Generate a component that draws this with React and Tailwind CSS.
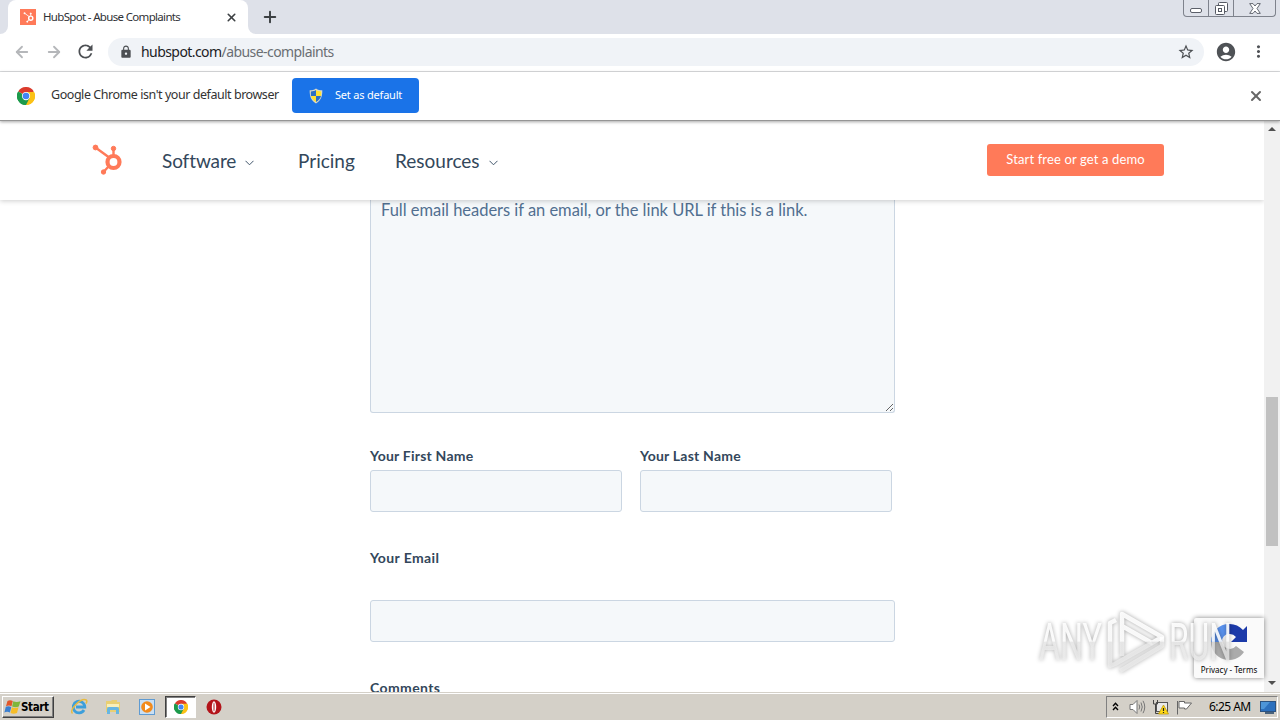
import React from 'react';
import { ArrowLeft, ArrowRight, X, Plus } from 'lucide-react';
import { MdRefresh, MdLock, MdStarOutline, MdAccountCircle, MdMoreVert } from 'react-icons/md';

const ChromeLogo = ({ size = 18 }) => (
    <svg width={size} height={size} viewBox="0 0 48 48" className="shrink-0">
        <path d="M24 24 L3.2 12 A24 24 0 0 1 44.8 12 Z" fill="#db3b2c" />
        <path d="M24 24 L44.8 12 A24 24 0 0 1 24 48 Z" fill="#fbc116" />
        <path d="M24 24 L24 48 A24 24 0 0 1 3.2 12 Z" fill="#1c9a4b" />
        <path d="M24 13 H45.3 A24 24 0 0 1 24 48 L33.5 29.5 Z" fill="#fbc116" />
        <path d="M14.5 29.5 L3.2 12 A24 24 0 0 0 24 48 L33.5 29.5 Z" fill="#1c9a4b" />
        <circle cx="24" cy="24" r="11" fill="#fff" />
        <circle cx="24" cy="24" r="8.8" fill="#4285f4" />
    </svg>
);

const Sprocket = ({ size, color, className = '' }) => (
    <svg width={size} height={size} viewBox="0 0 30 32" fill={color} stroke={color} className={`shrink-0 ${className}`}>
        <circle cx="3.5" cy="3.5" r="2.4" />
        <circle cx="21.5" cy="4.5" r="2.2" />
        <circle cx="11.5" cy="28" r="2.2" />
        <path d="M3.5 3.5 L16.5 13 M21.5 4.5 V11 M11.5 28 L16.5 22.5" fill="none" strokeWidth="2.4" />
        <circle cx="21.5" cy="18" r="6" fill="none" strokeWidth="4.2" />
    </svg>
);

const Shield = () => (
    <svg width="14" height="16" viewBox="0 0 14 16" className="shrink-0">
        <path d="M7 .5 C9 2 11 2.3 13.3 2.3 C13.5 8 12 12.8 7 15.5 C2 12.8 .5 8 .7 2.3 C3 2.3 5 2 7 .5Z" fill="#d9d9c8" />
        <path d="M7 2 V8 H2 C1.8 6.5 1.8 5 1.9 3.5 C4 3.4 5.5 3 7 2Z" fill="#2b6fc4" />
        <path d="M7 2 V8 H12 C12.2 6.5 12.2 5 12.1 3.5 C10 3.4 8.5 3 7 2Z" fill="#ffe131" />
        <path d="M7 8 V14 C4.2 12.4 2.5 10.5 2 8Z" fill="#ffe131" />
        <path d="M7 8 V14 C9.8 12.4 11.5 10.5 12 8Z" fill="#2b6fc4" />
    </svg>
);

const TabStrip = () => (
    <div className="flex h-[34px] bg-[#dee1e9]">
        <div className="w-2 bg-white">
            <div className="h-full rounded-br-lg bg-[#dee1e9]" />
        </div>
        <div className="flex w-[240px] items-center rounded-t-lg bg-white pl-3">
            <div className="flex h-4 w-4 shrink-0 items-center justify-center bg-[#ff7a59]">
                <Sprocket size={11} color="#fff" />
            </div>
            <span className="ml-[7px] w-[180px] whitespace-nowrap text-[11.5px] tracking-[-0.67px] text-[#2f3135]">HubSpot - Abuse Complaints</span>
            <X size={13} strokeWidth={3} className="ml-[2px] text-[#3c4043]" />
        </div>
        <div className="w-2 bg-white">
            <div className="h-full rounded-bl-lg bg-[#dee1e9]" />
        </div>
        <Plus size={18} strokeWidth={2.6} className="mt-2 ml-[5px] text-[#3c4043]" />
        {/* Window controls */}
        <div className="mr-1 ml-auto flex h-[17px] w-[93px] rounded-b border border-t-0 border-[#7e828c] bg-[#dee1e9]">
            <div className="flex w-[25px] items-end justify-center border-r border-[#7e828c] pb-[3px]">
                <div className="h-[5px] w-3 rounded-xs border border-[#5b5f69] bg-white" />
            </div>
            <div className="flex w-[25px] items-center justify-center border-r border-[#7e828c]">
                <svg width="13" height="14" viewBox="0 0 13 14" fill="#fff" stroke="#555963">
                    <rect x="3.5" y="1.5" width="9" height="9" rx="1" />
                    <rect x=".5" y="4.5" width="9" height="9" rx="1" />
                    <rect x="3.5" y="7.5" width="3" height="3" />
                </svg>
            </div>
            <div className="flex flex-1 items-center justify-center">
                <svg width="12" height="11" viewBox="0 0 12 11" fill="#fff" stroke="#555963" strokeWidth=".9">
                    <path d="M.7 .6 H4 L6 3 L8 .6 H11.3 L8 5.5 L11.3 10.4 H8 L6 8 L4 10.4 H.7 L4 5.5Z" />
                </svg>
            </div>
        </div>
    </div>
);

const Toolbar = () => (
    <div className="flex h-[38px] items-center border-b border-[#dcdee0] bg-white pb-[2px] pl-[13px]">
        <ArrowLeft size={18} strokeWidth={2.4} className="text-[#b5b7ba]" />
        <ArrowRight size={18} strokeWidth={2.4} className="ml-[14px] text-[#b5b7ba]" />
        <MdRefresh size={21} className="ml-3 text-[#4c4f53]" />
        <div className="ml-3 flex h-7 w-[1096px] items-center rounded-full bg-[#f0f3f7] pl-[11px]">
            <MdLock size={14} className="text-[#4c4f53]" />
            <span className="ml-2 text-[14px] tracking-[-0.57px] whitespace-nowrap text-[#6a6e73]">
                <span className="text-[#202124]">hubspot.com</span>/abuse-complaints
            </span>
            <MdStarOutline size={18} className="mr-[9px] ml-auto text-[#4c4f53]" />
        </div>
        <MdAccountCircle size={22} className="ml-[11px] text-[#4f5256]" />
        <MdMoreVert size={19} className="ml-3 text-[#4f5256]" />
    </div>
);

const InfoBar = () => (
    <div className="relative z-20 flex h-[49px] items-center border-b border-[#959595] bg-white pb-[1px] pl-[17px] shadow-[0_1px_3px_rgba(0,0,0,0.35)]">
        <ChromeLogo size={18} />
        <span className="ml-4 w-[241px] text-[12.5px] tracking-[-0.45px] whitespace-nowrap text-[#333]">Google Chrome isn't your default browser</span>
        <button className="flex h-[35px] w-[127px] items-center rounded bg-[#1a73e8] pl-[17px] text-white">
            <Shield />
            <span className="ml-3 text-[11px] tracking-[-0.2px] whitespace-nowrap">Set as default</span>
        </button>
        <X size={16} strokeWidth={3} className="mr-4 ml-auto text-[#666]" />
    </div>
);

const Chevron = () => (
    <svg width="9" height="6" viewBox="0 0 9 6" fill="none" stroke="#42566b" className="mt-[3px]">
        <path d="M.5 .8 L4.5 4.8 L8.5 .8" />
    </svg>
);

const SiteNav = () => (
    <nav className="relative z-10 flex h-[79px] shrink-0 items-center bg-white pt-[2px] pl-[91px] font-[Lato,sans-serif] text-[19px] text-[#33475b] shadow-[0_1px_5px_rgba(0,0,0,0.2)]">
        <Sprocket size={32} color="#ff7a59" className="mb-1" />
        <div className="ml-[39px] flex w-[136px] items-center gap-[9px]">
            <span className="tracking-[-0.1px]">Software</span>
            <Chevron />
        </div>
        <span className="w-[97px]">Pricing</span>
        <div className="flex items-center gap-[9px]">
            <span>Resources</span>
            <Chevron />
        </div>
        <button className="mr-[100px] mb-1 ml-auto h-8 w-[177px] rounded-[3px] bg-[#ff7a59] pt-[1px] text-[13px] tracking-[0.13px] whitespace-nowrap text-white">Start free or get a demo</button>
    </nav>
);

const TextField = ({ label, className, labelClass = 'mb-1' }) => (
    <label className={`flex flex-col text-[14px] leading-5 font-bold tracking-[0.22px] text-[#33475b] ${className}`}>
        <span className={labelClass}>{label}</span>
        <input className="h-[42px] rounded-[3px] border border-[#cbd6e2] bg-[#f5f8fa]" />
    </label>
);

const ComplaintForm = () => (
    <form className="ml-[370px] w-[525px] font-[Lato,sans-serif]">
        <textarea
            className="block h-[213px] w-full rounded-b-[3px] border border-t-0 border-[#cbd6e2] bg-[#f5f8fa] px-[10px] text-[16.5px] leading-[20px] tracking-[-0.03px] placeholder:text-[#516f90]"
            placeholder="Full email headers if an email, or the link URL if this is a link."
        />
        <div className="mt-[33px] flex gap-[18px]">
            <TextField label="Your First Name" className="w-[252px]" />
            <TextField label="Your Last Name" className="w-[252px]" />
        </div>
        <TextField label="Your Email" className="mt-9" labelClass="mb-8 tracking-[0.38px]" />
        <div className="mt-9 text-[14px] leading-5 font-bold tracking-[0.38px] text-[#33475b]">Comments</div>
    </form>
);

const Scrollbar = () => (
    <div className="flex w-4 flex-col items-center bg-[#f1f1f1] pt-[6px] pb-[7px]">
        <div className="border-x-[4px] border-b-[4px] border-x-transparent border-b-[#505050]" />
        <div className="mt-[266px] h-[149px] w-3 bg-[#c1c1c1]" />
        <div className="mt-auto border-x-[4px] border-t-[4px] border-x-transparent border-t-[#505050]" />
    </div>
);

const Recaptcha = () => (
    <div className="absolute right-4 bottom-[14px] flex h-[60px] w-[70px] flex-col items-center rounded-l-xs bg-[#fafafa] pt-1 shadow-[0_0_5px_gray]">
        <svg width="40" height="40" viewBox="0 0 40 40">
            <path d="M20 2 A18 18 0 0 0 2 20 H13 A7 7 0 0 1 20 12 Z" fill="#5a92ee" />
            <path d="M20 2 A18 18 0 0 1 34 8 L38 4 V20 H22 L27 15 A8 8 0 0 0 20 12Z" fill="#1c3aa9" />
            <path d="M2 20 A18 18 0 0 0 35 30 L27 24 A8 8 0 0 1 13 20Z" fill="#ababab" />
        </svg>
        <span className="mt-[2px] text-[8px] leading-[12px] whitespace-nowrap text-black">Privacy - Terms</span>
    </div>
);

const Watermark = () => (
    <svg
        className="absolute right-[40px] bottom-[14px] drop-shadow-[0_0_2px_rgba(0,0,0,0.4)]"
        width="204"
        height="74"
        viewBox="0 0 204 74"
        fill="url(#markFade)"
        fontFamily="Roboto, sans-serif"
        fontSize="51"
    >
        <defs>
            <linearGradient id="markFade" gradientUnits="userSpaceOnUse" x1="0" y1="0" x2="0" y2="74">
                <stop offset=".5" stopColor="#fff" stopOpacity=".9" />
                <stop offset=".52" stopColor="#eee" stopOpacity=".75" />
            </linearGradient>
        </defs>
        <text x="3" y="56" textLength="63" lengthAdjust="spacingAndGlyphs">ANY</text>
        <text x="133" y="56" textLength="63" lengthAdjust="spacingAndGlyphs">RUN</text>
        <g fill="none" stroke="url(#markFade)" strokeWidth="4.5" strokeLinejoin="round">
            <path d="M80 16 L74 19 V62 L79 60 L116 39" />
            <path d="M86 52 V10 L126 33 L116 39 L86 22" />
            <path d="M84 67 L126 42 V33" />
        </g>
    </svg>
);

const StartFlag = () => (
    <svg width="17" height="16" viewBox="0 0 17 16" className="shrink-0">
        <path d="M3.5 2 Q6 .5 8.8 2 L7.5 7.2 Q5 6 2 7.2Z" fill="#e2572a" />
        <path d="M9.3 2.2 Q12.5 3.8 16.5 2.2 L14.8 7.5 Q11.5 8.8 8.1 7.5Z" fill="#7fb63b" />
        <path d="M1.8 7.8 Q4.5 6.6 7.3 8 L5.9 13.5 Q3 12.2 .4 13.5Z" fill="#3b7fd0" />
        <path d="M7.9 8.2 Q11 9.6 14.5 8.2 L13 14 Q9.5 15.3 6.5 14Z" fill="#f6bd28" />
    </svg>
);

const Taskbar = () => (
    <footer className="flex h-7 items-center border-t border-[#d4d0c8] bg-[#d4d0c8] pt-[1px] shadow-[inset_0_1px_0_#fff]">
        <div className="ml-[2px] flex h-[22px] w-[52px] items-center border border-t-white border-r-[#404040] border-b-[#404040] border-l-white pl-[1px] shadow-[inset_-1px_-1px_0_#808080]">
            <StartFlag />
            <span className="pt-[1px] text-[11.5px] font-bold tracking-[-0.35px] text-black font-['DejaVu_Sans_Condensed','DejaVu_Sans',sans-serif]">Start</span>
        </div>
        {/* Internet Explorer */}
        <svg width="18" height="18" viewBox="0 0 18 18" fill="none" className="ml-4">
            <path d="M14 12 A5.8 5.8 0 1 1 14.8 9 H6" stroke="#3d9fdb" strokeWidth="2.8" />
            <path d="M2.5 15.5 C-1 12 11 -1 16.3 2 Q17.5 3 16 5.5" stroke="#e8bb3f" strokeWidth="1.5" />
        </svg>
        {/* Explorer */}
        <svg width="16" height="16" viewBox="0 0 16 16" className="ml-[17px]">
            <path d="M1 2 H6 L7 1 H12 V3 H15 V13 H1Z" fill="#e9cf73" />
            <path d="M2 5 H14 V8 H2Z" fill="#f9efb9" />
            <path d="M2 15 V10 Q2 8 4 8 H12 Q14 8 14 10 V15 H11 V11 H5 V15Z" fill="#67b6e2" />
        </svg>
        {/* Media player */}
        <svg width="16" height="16" viewBox="0 0 16 16" className="ml-[18px]">
            <rect x=".5" y=".5" width="15" height="15" fill="#c9dff3" stroke="#5f9bd2" />
            <circle cx="8" cy="8" r="5.8" fill="#f28a1b" />
            <path d="M6 4.5 L11.5 8 L6 11.5Z" fill="#fff" />
        </svg>
        <div className="ml-[10px] flex h-[22px] w-[31px] items-center justify-center border border-t-[#404040] border-r-white border-b-white border-l-[#404040] bg-white shadow-[inset_1px_1px_0_#808080]">
            <ChromeLogo size={14} />
        </div>
        <svg width="16" height="16" viewBox="0 0 16 16" className="ml-[10px]">
            <circle cx="8" cy="8" r="7.5" fill="#b3141a" />
            <ellipse cx="8" cy="8" rx="2.2" ry="5.8" fill="#fff" />
            <ellipse cx="8" cy="8" rx=".8" ry="4.6" fill="#c9686b" />
        </svg>
        {/* Tray */}
        <div className="mr-[2px] ml-auto flex h-[22px] w-[172px] items-center border border-t-[#808080] border-r-white border-b-white border-l-[#808080] pl-[5px]">
            <svg width="7" height="9" viewBox="0 0 7 9" fill="none" stroke="#000" strokeWidth="1.4" className="mb-[2px]">
                <path d="M1 4 L3.5 1.3 L6 4 M1 8 L3.5 5.3 L6 8" />
            </svg>
            <svg width="17" height="16" viewBox="0 0 17 16" fill="none" stroke="#777" className="ml-[10px]">
                <path d="M1 5.5 H4 L8 1.5 V14.5 L4 10.5 H1Z" fill="#fff" />
                <path d="M10 5.5 Q11.5 8 10 10.5 M12 3.5 Q14.5 8 12 12.5 M14 1.8 Q17.5 8 14 14.2" />
            </svg>
            <svg width="17" height="16" viewBox="0 0 17 16" className="ml-[6px]">
                <rect x="4.5" y="3.5" width="11" height="9" fill="#e9e9e9" stroke="#555" />
                <path d="M1.5 1 V5 H5.5 V1 M3.5 5 V14.5 H8" fill="none" stroke="#444" />
                <path d="M11.5 6 L16.5 15 H6.5Z" fill="#ffd916" stroke="#b89300" strokeWidth=".7" />
                <path d="M11.5 9 V12 M11.5 13 V14" stroke="#222" strokeWidth="1.2" />
            </svg>
            <svg width="17" height="15" viewBox="0 0 17 15" fill="#fff" stroke="#666" className="ml-[7px]">
                <path d="M1.5 1 V14.5 M3 1.5 H8.5 V3 H15.5 L13 6 L10.5 9 H8.5 V8 H3Z" />
            </svg>
            <span className="ml-4 text-[12px] tracking-[-0.55px] whitespace-nowrap text-black">6:25 AM</span>
            <svg width="16" height="13" viewBox="0 0 16 13" className="mr-[1px] ml-auto">
                <rect x=".5" y=".5" width="15" height="10" fill="#2c70bd" stroke="#2b5280" />
                <path d="M1 1 H10 L4 8 H1Z" fill="#4d95d8" />
                <path d="M5 12 H14" stroke="#49627b" strokeWidth="2" />
            </svg>
        </div>
    </footer>
);

const App = () => {
    return (
        <div className="flex h-[720px] w-[1280px] flex-col overflow-hidden bg-white font-['Noto_Sans',sans-serif]">
            <TabStrip />
            <Toolbar />
            <InfoBar />
            <div className="relative flex h-[571px] overflow-hidden">
                <main className="flex h-full w-[1264px] flex-col overflow-hidden">
                    <SiteNav />
                    <ComplaintForm />
                </main>
                <Scrollbar />
                <Recaptcha />
                <Watermark />
            </div>
            <Taskbar />
        </div>
    );
};

export default App;
